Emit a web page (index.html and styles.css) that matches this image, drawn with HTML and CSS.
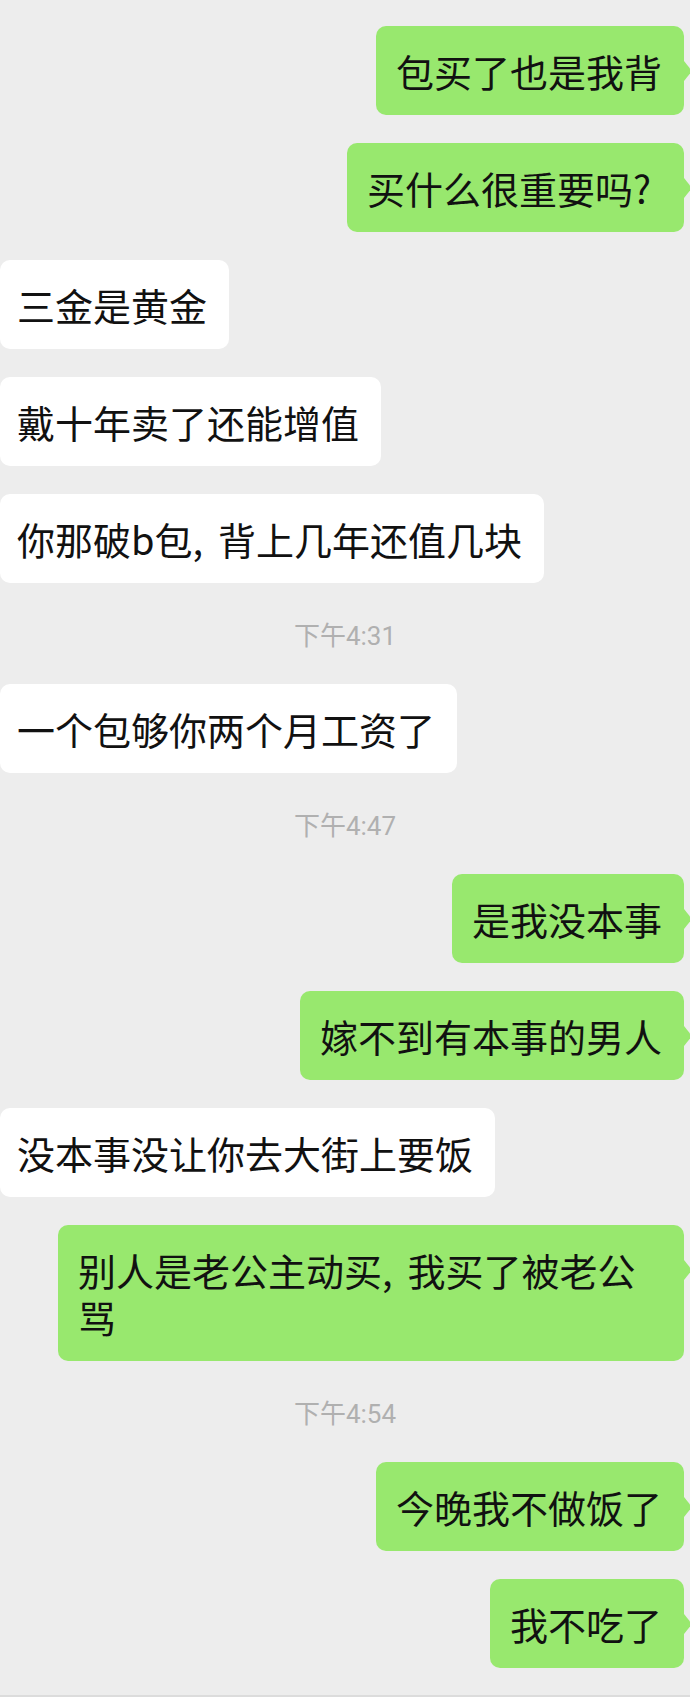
FILE: index.html
```html
<!DOCTYPE html>
<html lang="zh-CN">
<head>
    <meta charset="UTF-8">
    <meta name="viewport" content="width=device-width, initial-scale=1.0">
    <title>聊天记录</title>
    <link rel="stylesheet" href="styles.css">
</head>
<body>
    <div class="chat">
        <div class="row me"><div class="bubble">包买了也是我背</div></div>
        <div class="row me"><div class="bubble">买什么很重要吗<span class="q">?</span></div></div>
        <div class="row you"><div class="bubble">三金是黄金</div></div>
        <div class="row you"><div class="bubble">戴十年卖了还能增值</div></div>
        <div class="row you"><div class="bubble">你那破b包<span class="c">,</span>背上几年还值几块</div></div>
        <div class="time">下午4:31</div>
        <div class="row you"><div class="bubble">一个包够你两个月工资了</div></div>
        <div class="time">下午4:47</div>
        <div class="row me"><div class="bubble">是我没本事</div></div>
        <div class="row me"><div class="bubble">嫁不到有本事的男人</div></div>
        <div class="row you"><div class="bubble">没本事没让你去大街上要饭</div></div>
        <div class="row me"><div class="bubble">别人是老公主动买<span class="c">,</span>我买了被老公骂</div></div>
        <div class="time">下午4:54</div>
        <div class="row me"><div class="bubble">今晚我不做饭了</div></div>
        <div class="row me"><div class="bubble">我不吃了</div></div>
    </div>
</body>
</html>
```

FILE: styles.css
```css
body {
    margin: 0;
    background: #ededed;
    font-family: "Noto Sans CJK SC", "Noto Sans", sans-serif;
    color: #111;
    overflow: hidden;
}
.chat {
    display: flex;
    flex-direction: column;
    gap: 28px;
    padding: 26px 0 27px;
    border-bottom: 2px solid #dcdcdc;
    min-height: 1642px;
    box-sizing: border-box;
}
.row {
    display: flex;
}
.row.me {
    justify-content: flex-end;
    padding-right: 6px;
}
.row.you {
    justify-content: flex-start;
}
.bubble {
    position: relative;
    font-size: 38px;
    line-height: 47px;
    padding: 21px 22px 21px 20px;
    border-radius: 10px;
    max-width: 584px;
    word-break: break-all;
}
.me .bubble {
    background: #98e86e;
}
.me .bubble::after {
    content: "";
    position: absolute;
    right: -8px;
    top: 35px;
    border-left: 8px solid #98e86e;
    border-top: 10px solid transparent;
    border-bottom: 10px solid transparent;
}
.you .bubble {
    background: #fff;
    padding: 21px 22px 21px 17px;
}
.q {
    margin-right: 11px;
}
.c {
    margin-right: 15px;
}
.time {
    height: 45px;
    display: flex;
    align-items: center;
    justify-content: center;
    font-family: Roboto, "Noto Sans CJK SC", sans-serif;
    font-size: 26px;
    color: #b0b0b0;
}
```
